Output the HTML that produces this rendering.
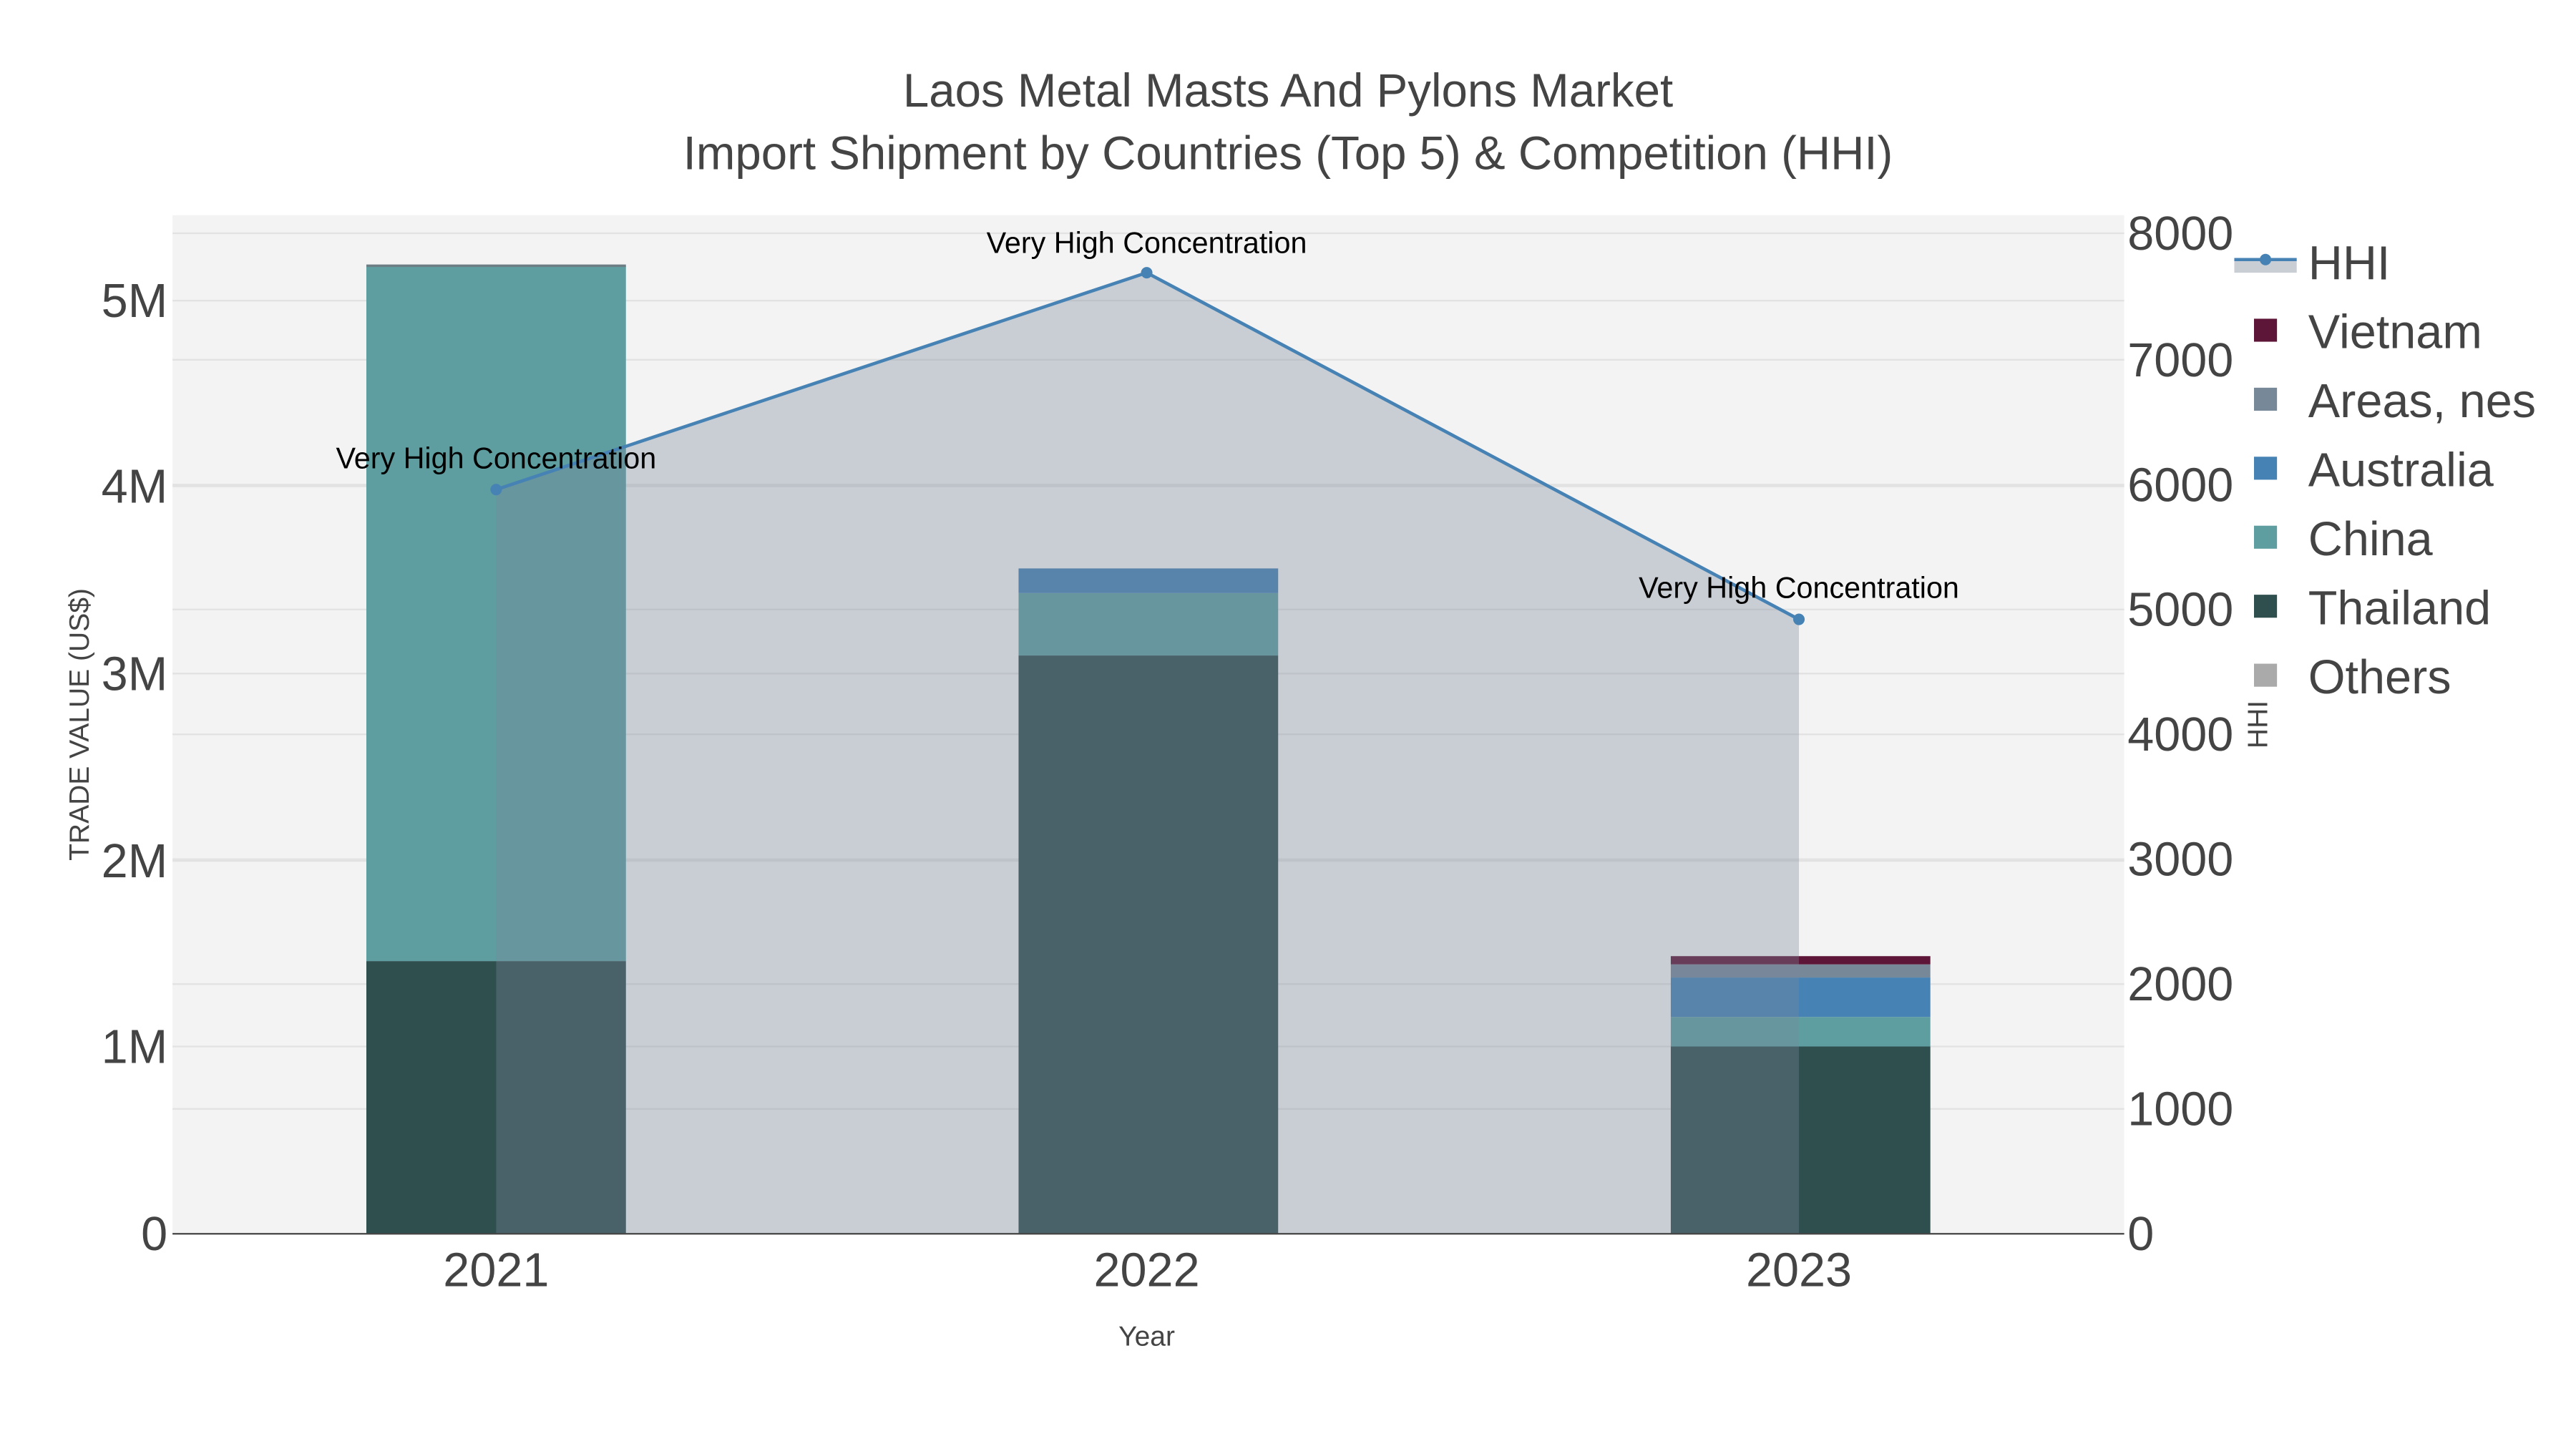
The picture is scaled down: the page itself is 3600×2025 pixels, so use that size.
<!DOCTYPE html>
<html><head><meta charset="utf-8"><style>
html,body{margin:0;padding:0;background:#fff;}
svg{display:block;}
text{font-family:"Liberation Sans",Arial,sans-serif;}
</style></head><body>
<svg width="3600" height="2025" viewBox="0 0 1568 882" preserveAspectRatio="none" xmlns="http://www.w3.org/2000/svg">
<rect width="1568" height="882" fill="#fff"/>
<rect x="105" y="131" width="1188" height="620" fill="#f3f3f3"/>
<g stroke="#e2e2e2" stroke-width="1">
<line x1="105" x2="1293" y1="637" y2="637"/><line x1="105" x2="1293" y1="524" y2="524"/>
<line x1="105" x2="1293" y1="410" y2="410"/><line x1="105" x2="1293" y1="296" y2="296"/>
<line x1="105" x2="1293" y1="183" y2="183"/>
<line x1="105" x2="1293" y1="675" y2="675"/><line x1="105" x2="1293" y1="599" y2="599"/>
<line x1="105" x2="1293" y1="523" y2="523"/><line x1="105" x2="1293" y1="447" y2="447"/>
<line x1="105" x2="1293" y1="371" y2="371"/><line x1="105" x2="1293" y1="295" y2="295"/>
<line x1="105" x2="1293" y1="219" y2="219"/><line x1="105" x2="1293" y1="142" y2="142"/>
</g>
<rect x="223" y="585" width="158" height="166" fill="#2f4f4f"/>
<rect x="223" y="162" width="158" height="423" fill="#5f9ea0"/>
<rect x="223" y="161" width="158" height="1.5" fill="#6d7d84"/>
<rect x="620" y="399" width="158" height="352" fill="#2f4f4f"/>
<rect x="620" y="361" width="158" height="38" fill="#5f9ea0"/>
<rect x="620" y="346" width="158" height="15" fill="#4682b4"/>
<rect x="1017" y="637" width="158" height="114" fill="#2f4f4f"/>
<rect x="1017" y="619" width="158" height="18" fill="#5f9ea0"/>
<rect x="1017" y="595" width="158" height="24" fill="#4682b4"/>
<rect x="1017" y="587" width="158" height="8" fill="#778899"/>
<rect x="1017" y="582" width="158" height="5" fill="#5e1638"/>
<polygon points="302,298 698,166 1095,377 1095,751 302,751" fill="rgb(124,135,155)" fill-opacity="0.35"/>
<polyline points="302,298 698,166 1095,377" fill="none" stroke="#4682b4" stroke-width="2"/>
<circle cx="302" cy="298" r="3.5" fill="#4682b4"/><circle cx="698" cy="166" r="3.5" fill="#4682b4"/><circle cx="1095" cy="377" r="3.5" fill="#4682b4"/>
<line x1="105" x2="1293" y1="751" y2="751" stroke="#444" stroke-width="1"/>
<g font-size="18" fill="#000" text-anchor="middle">
<text x="302" y="285">Very High Concentration</text>
<text x="698" y="154">Very High Concentration</text>
<text x="1095" y="364">Very High Concentration</text>
</g>
<g fill="#444" text-anchor="middle" font-size="28.5">
<text x="784" y="65">Laos Metal Masts And Pylons Market</text>
<text x="784" y="103">Import Shipment by Countries (Top 5) &amp; Competition (HHI)</text>
</g>
<g fill="#444" font-size="29" text-anchor="end">
<text x="102" y="761">0</text><text x="102" y="647">1M</text><text x="102" y="534">2M</text>
<text x="102" y="420">3M</text><text x="102" y="306">4M</text><text x="102" y="193">5M</text>
</g>
<g fill="#444" font-size="29" text-anchor="start">
<text x="1295" y="761">0</text><text x="1295" y="685">1000</text><text x="1295" y="609">2000</text>
<text x="1295" y="533">3000</text><text x="1295" y="457">4000</text><text x="1295" y="381">5000</text>
<text x="1295" y="305">6000</text><text x="1295" y="229">7000</text><text x="1295" y="152">8000</text>
</g>
<g fill="#444" font-size="29" text-anchor="middle">
<text x="302" y="783">2021</text><text x="698" y="783">2022</text><text x="1095" y="783">2023</text>
</g>
<text x="698" y="819" font-size="17" fill="#444" text-anchor="middle">Year</text>
<text transform="translate(54,441) rotate(-90)" font-size="17" fill="#444" text-anchor="middle">TRADE VALUE (US$)</text>
<text transform="translate(1380,441) rotate(-90)" font-size="17" fill="#444" text-anchor="middle">HHI</text>
<rect x="1360" y="159" width="38" height="7" fill="#c9cdd4"/>
<line x1="1360" x2="1398" y1="158" y2="158" stroke="#4682b4" stroke-width="2"/>
<circle cx="1379" cy="158" r="3.5" fill="#4682b4"/>
<g font-size="29" fill="#444">
<text x="1405" y="170">HHI</text>
<text x="1405" y="212">Vietnam</text>
<text x="1405" y="254">Areas, nes</text>
<text x="1405" y="296">Australia</text>
<text x="1405" y="338">China</text>
<text x="1405" y="380">Thailand</text>
<text x="1405" y="422">Others</text>
</g>
<rect x="1372" y="194" width="14" height="14" fill="#5e1638"/>
<rect x="1372" y="236" width="14" height="14" fill="#778899"/>
<rect x="1372" y="278" width="14" height="14" fill="#4682b4"/>
<rect x="1372" y="320" width="14" height="14" fill="#5f9ea0"/>
<rect x="1372" y="362" width="14" height="14" fill="#2f4f4f"/>
<rect x="1372" y="404" width="14" height="14" fill="#aaaaaa"/>
</svg>
</body></html>
